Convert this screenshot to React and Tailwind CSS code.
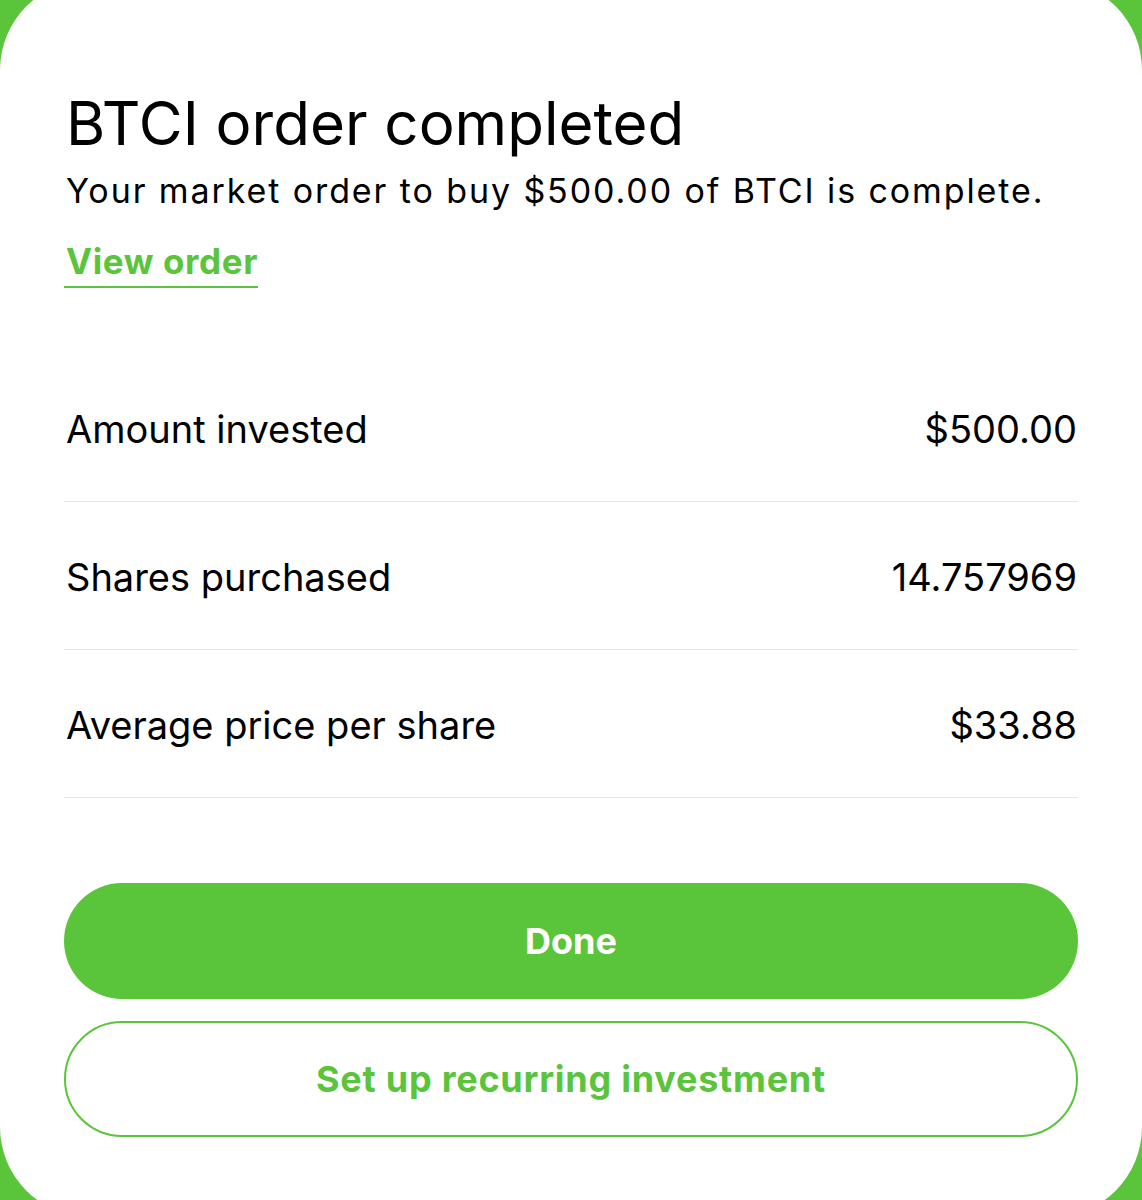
import React from "react";

const rows = [
  { label: "Amount invested", value: "$500.00" },
  { label: "Shares purchased", value: "14.757969" },
  { label: "Average price per share", value: "$33.88" },
];

const OrderCompleted = () => {
  return (
    <div
      className="h-[1200px] overflow-hidden bg-[#5ac53b]"
      style={{ fontFamily: "Inter, 'Noto Sans', sans-serif" }}
    >
      <div className="-mt-[20px] h-[1237px] rounded-[90px] bg-white px-[64px] pt-[108px] text-black">
        <h1 className="pl-[2px] text-[60px] leading-[70px] font-normal">
          BTCI order completed
        </h1>
        <p className="mt-[13px] pl-[2px] text-[34px] leading-[40px] tracking-[1.9px]">
          Your market order to buy $500.00 of BTCI is complete.
        </p>
        <a
          href="#"
          className="mt-[30px] inline-block border-b-2 border-[#5ac53b] pb-[5px] pl-[2px] text-[35px] leading-[40px] font-bold text-[#5ac53b] tracking-[0.6px]"
        >
          View order
        </a>

        <div className="mt-[66px]">
          {rows.map((row) => (
            <div
              key={row.label}
              className="flex items-center justify-between border-b border-[#e8e8e8] pt-[53px] pb-[50px] text-[38px] leading-[44px]"
            >
              <span className="pl-[2px]">{row.label}</span>
              <span className="pr-[1px]">{row.value}</span>
            </div>
          ))}
        </div>

        <div className="mt-[85px] flex flex-col gap-[22px]">
          <button className="h-[116px] w-full rounded-full bg-[#5ac53b] text-[36px] font-bold text-white">
            Done
          </button>
          <button className="h-[116px] w-full rounded-full border-2 border-[#5ac53b] bg-white text-[36px] font-bold tracking-[0.75px] text-[#5ac53b]">
            Set up recurring investment
          </button>
        </div>
      </div>
    </div>
  );
};

export default function App() {
  return <OrderCompleted />;
}
